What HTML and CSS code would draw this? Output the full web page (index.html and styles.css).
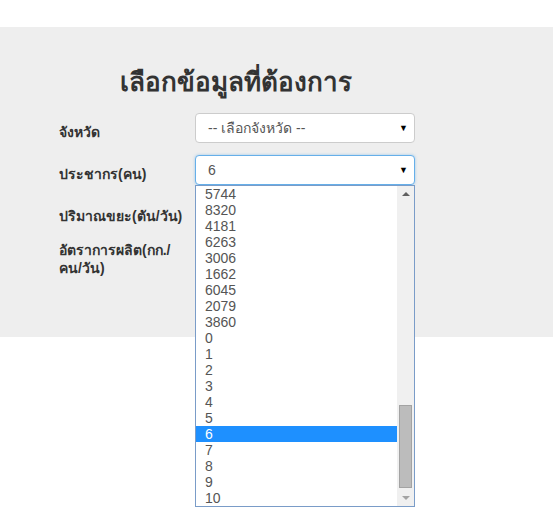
FILE: index.html
```html
<!DOCTYPE html>
<html lang="th">
<head>
  <meta charset="UTF-8" />
  <meta name="viewport" content="width=device-width, initial-scale=1.0"/>
  <title>เลือกข้อมูล</title>
  <link rel="stylesheet" href="styles.css">
</head>
<body>
<div class="band">
  <div class="panel">
    <h1>เลือกข้อมูลที่ต้องการ</h1>

    <div class="row">
      <label>จังหวัด</label>
      <div class="select">-- เลือกจังหวัด --<span class="caret">▼</span></div>
    </div>

    <div class="row">
      <label>ประชากร(คน)</label>
      <div class="select open">6<span class="caret">▼</span>
        <div class="list">
          <ul>
            <li>5744</li><li>8320</li><li>4181</li><li>6263</li><li>3006</li>
            <li>1662</li><li>6045</li><li>2079</li><li>3860</li><li>0</li>
            <li>1</li><li>2</li><li>3</li><li>4</li><li>5</li>
            <li class="active">6</li><li>7</li><li>8</li><li>9</li><li>10</li>
          </ul>
          <div class="scrollbar">
            <span class="arrow up"></span>
            <span class="thumb"></span>
            <span class="arrow down"></span>
          </div>
        </div>
      </div>
    </div>

    <div class="row tight">
      <label>ปริมาณขยะ(ตัน/วัน)</label>
    </div>

    <div class="row">
      <label>อัตราการผลิต(กก./<br>คน/วัน)</label>
    </div>
  </div>
</div>
</body>
</html>
```

FILE: styles.css
```css
html, body {
  min-height: 514px;
}
body {
  font-family: 'Liberation Sans', 'DejaVu Sans', sans-serif;
  margin: 0;
  padding-top: 27px;
  box-sizing: border-box;
  background-color: white;
  color: #333;
}
.band {
  background-color: #eeeeee;
  height: 310px;
}
.panel {
  width: 356px;
  margin-left: 59px;
  padding-top: 38px;
}
h1 {
  font-size: 26px;
  font-weight: bold;
  text-align: center;
  margin: 0 0 14px 0;
  height: 34px;
  line-height: 34px;
  padding-right: 2px;
}
.row {
  display: flex;
  align-items: flex-start;
  margin-bottom: 12px;
}
.row.tight {
  margin-bottom: 6px;
}
label {
  width: 136px;
  font-size: 14px;
  font-weight: bold;
  padding-top: 10px;
  line-height: 18px;
  white-space: nowrap;
}
.select {
  position: relative;
  width: 220px;
  height: 30px;
  box-sizing: border-box;
  border: 1px solid #ccc;
  border-radius: 4px;
  background: white;
  padding: 0 12px;
  font-size: 14px;
  line-height: 28px;
  color: #555;
}
.select.open {
  border-color: #66afe9;
  box-shadow: 0 0 3px rgba(102,175,233,0.6);
}
.caret {
  position: absolute;
  right: 6px;
  top: 0;
  font-size: 9px;
  color: #000;
}
.list {
  position: absolute;
  left: -1px;
  top: 29px;
  width: 220px;
  height: 322px;
  box-sizing: border-box;
  background: white;
  border: 1px solid #7a9cc8;
  z-index: 2;
}
.list ul {
  margin: 0;
  padding: 0;
  list-style: none;
}
.list li {
  height: 16px;
  line-height: 16px;
  font-size: 14px;
  padding-left: 9px;
  margin-right: 17px;
  color: #555;
}
.list li.active {
  background: #1e90ff;
  color: white;
}
.scrollbar {
  position: absolute;
  right: 0;
  top: 0;
  bottom: 0;
  width: 17px;
  background: #f0f0f0;
}
.thumb {
  position: absolute;
  left: 2px;
  right: 2px;
  top: 219px;
  height: 83px;
  box-sizing: border-box;
  background: #bcbcbc;
  border: 1px solid #a3a3a3;
}
.arrow {
  position: absolute;
  left: 5px;
  width: 0;
  height: 0;
  border-left: 4px solid transparent;
  border-right: 4px solid transparent;
}
.arrow.up {
  top: 6px;
  border-bottom: 4px solid #606060;
}
.arrow.down {
  bottom: 6px;
  border-top: 4px solid #a3a3a3;
}
```
